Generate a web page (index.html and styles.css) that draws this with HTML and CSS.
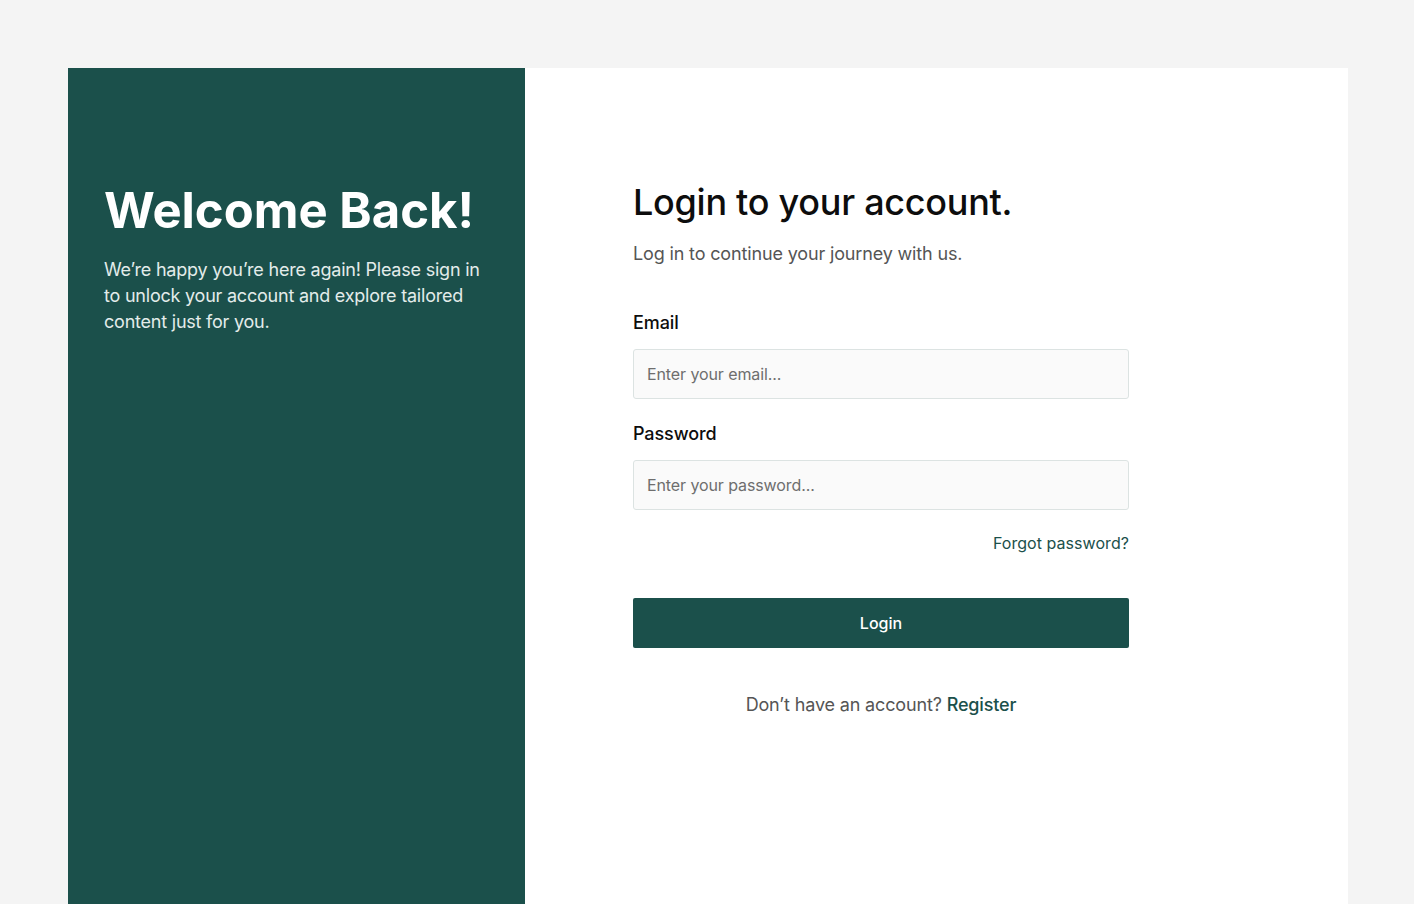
FILE: index.html
```html
<!DOCTYPE html>
<html lang="en">
<head>
<meta charset="utf-8">
<title>Login</title>
<link rel="stylesheet" href="styles.css">
</head>
<body>
<div class="card">
  <aside class="welcome">
    <h1 class="welcome-title">Welcome Back!</h1>
    <p class="welcome-text">We’re happy you’re here again! Please sign in to unlock your account and explore tailored content just for you.</p>
  </aside>
  <main class="login">
    <form class="login-form">
      <h2 class="login-title">Login to your account.</h2>
      <p class="login-sub">Log in to continue your journey with us.</p>
      <div class="field field-first">
        <label class="field-label" for="email">Email</label>
        <input class="field-input" id="email" type="email" placeholder="Enter your email...">
      </div>
      <div class="field">
        <label class="field-label" for="password">Password</label>
        <input class="field-input" id="password" type="password" placeholder="Enter your password...">
      </div>
      <div class="forgot-row"><a class="forgot" href="#">Forgot password?</a></div>
      <button class="login-btn" type="button">Login</button>
      <p class="register">Don’t have an account? <a class="register-link" href="#">Register</a></p>
    </form>
  </main>
</div>
</body>
</html>
```
FILE: styles.css
```css
* { box-sizing: border-box; }
html, body { margin: 0; padding: 0; }
body {
  background: #f4f4f4;
  font-family: Inter, "Noto Sans", "Liberation Sans", sans-serif;
  padding: 68px 66px 0 68px;
  height: 904px;
  overflow: hidden;
}
.card {
  display: flex;
  width: 1280px;
  height: 836px;
  background: #ffffff;
}
.welcome {
  width: 457px;
  flex: none;
  background: #1b504b;
  padding: 114px 36px 0 36px;
}
.welcome-title {
  margin: 0;
  font-size: 49px;
  font-weight: 700;
  line-height: 58px;
  color: #ffffff;
  letter-spacing: 0;
}
.welcome-text {
  margin: 17px 0 0 0;
  font-size: 18px;
  line-height: 26px;
  color: #e3ecea;
  letter-spacing: -0.22px;
}
.login {
  flex: 1;
  padding: 113px 0 0 108px;
}
.login-form {
  width: 496px;
  display: flex;
  flex-direction: column;
}
.login-title {
  margin: 0;
  font-size: 36px;
  font-weight: 500;
  line-height: 43px;
  color: #0d0d0d;
  letter-spacing: -0.27px;
}
.login-sub {
  margin: 17px 0 0 0;
  font-size: 18px;
  line-height: 26px;
  color: #555555;
  letter-spacing: -0.15px;
}
.field {
  display: flex;
  flex-direction: column;
  gap: 13px;
  margin-top: 22px;
}
.field-first { margin-top: 43px; }
.field-label {
  font-size: 18px;
  line-height: 26px;
  font-weight: 500;
  color: #0d0d0d;
  letter-spacing: -0.1px;
}
.field-input {
  height: 50px;
  border: 1px solid #dce3e2;
  border-radius: 3px;
  background: #fafafa;
  padding: 0 13px;
  font-family: inherit;
  font-size: 16px;
  color: #222;
  outline: none;
  letter-spacing: -0.1px;
}
.field-input::placeholder { color: #6e6e6e; }
.forgot-row {
  display: flex;
  justify-content: flex-end;
  margin-top: 21px;
}
.forgot {
  font-size: 16px;
  line-height: 24px;
  color: #1b504b;
  text-decoration: none;
  letter-spacing: 0.05px;
}
.login-btn {
  margin-top: 43px;
  height: 50px;
  border: none;
  border-radius: 2px;
  background: #1b504b;
  color: #ffffff;
  font-family: inherit;
  font-size: 16px;
  font-weight: 500;
  cursor: pointer;
}
.register {
  margin: 44px 0 0 0;
  text-align: center;
  font-size: 18px;
  line-height: 26px;
  color: #555555;
  letter-spacing: -0.15px;
}
.register-link {
  color: #1b504b;
  text-decoration: none;
  font-weight: 500;
}
```
